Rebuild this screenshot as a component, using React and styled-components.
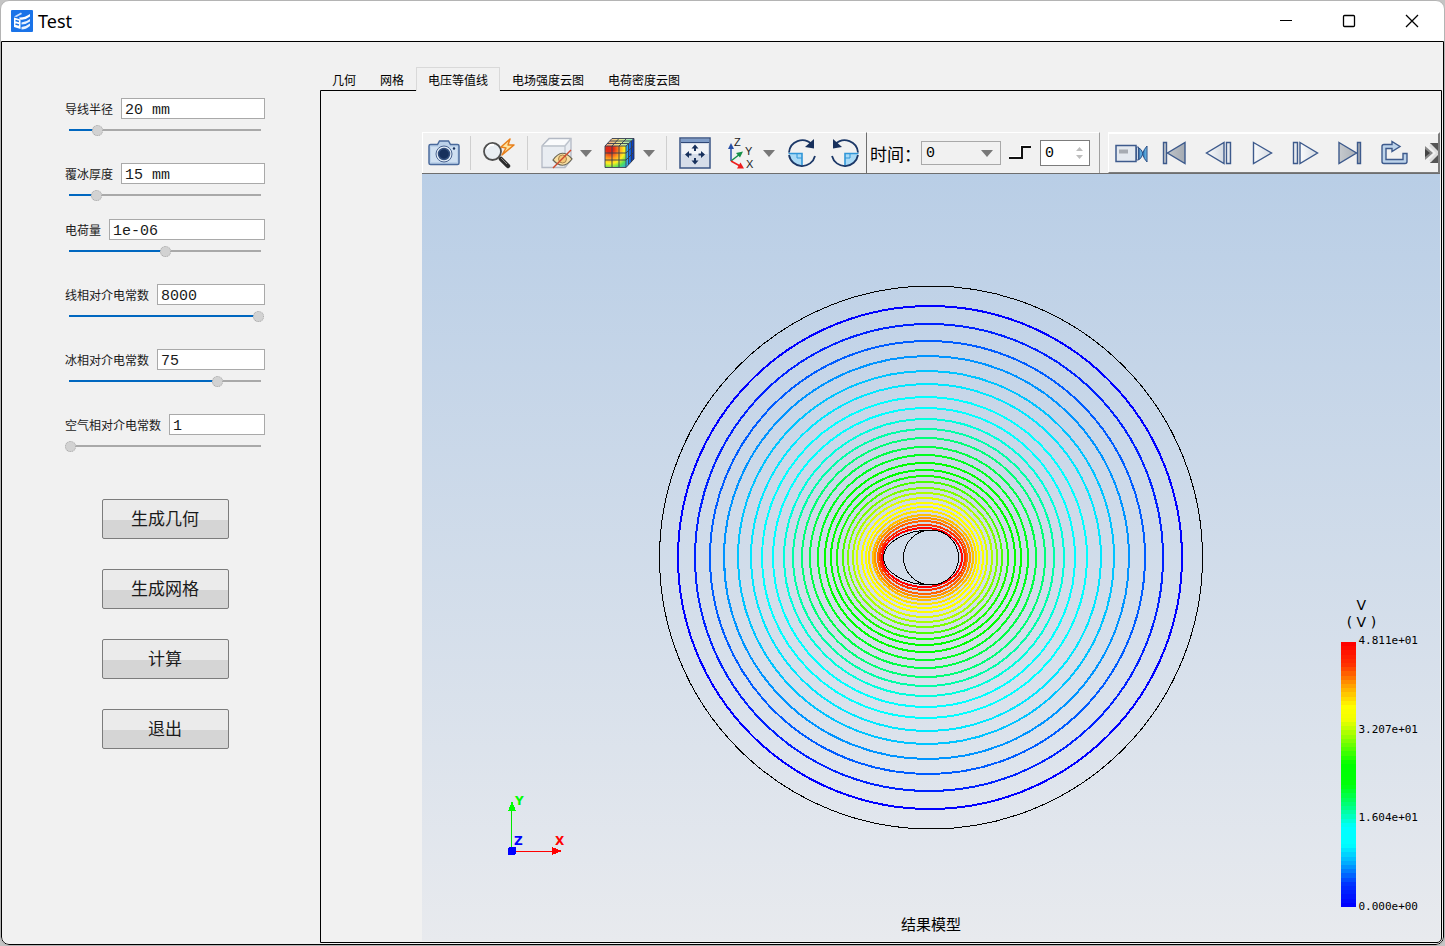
import React, { useState } from 'react';
import styled, { createGlobalStyle, css } from 'styled-components';

const PARAMS = [
  { id: 'radius', label: '导线半径', text: '20 mm', pos: 14.5 },
  { id: 'ice', label: '覆冰厚度', text: '15 mm', pos: 13.5, tight: true },
  { id: 'charge', label: '电荷量', text: '1e-06', pos: 50 },
  { id: 'wireEps', label: '线相对介电常数', text: '8000', pos: 99.5 },
  { id: 'iceEps', label: '冰相对介电常数', text: '75', pos: 78 },
  { id: 'airEps', label: '空气相对介电常数', text: '1', pos: 0 },
];

const ACTIONS = ['生成几何', '生成网格', '计算', '退出'];
const TABS = ['几何', '网格', '电压等值线', '电场强度云图', '电荷密度云图'];
const TICKS = ['4.811e+01', '3.207e+01', '1.604e+01', '0.000e+00'];

// left, right, top, colour of every equipotential line, from the outside in
const CONTOURS = [
  [678, 1182, 306, '#0000ff'],
  [695, 1163, 324, '#0022ff'],
  [710, 1145, 341, '#005cff'],
  [724, 1129, 356, '#0094ff'],
  [738, 1114, 371, '#00c4ff'],
  [751, 1101, 384, '#00e8ff'],
  [762, 1087, 397, '#00ffff'],
  [773, 1075, 408, '#00ffff'],
  [784, 1064, 419, '#00ffdc'],
  [793, 1054, 429, '#00ffa8'],
  [802, 1045, 438, '#00ff78'],
  [810, 1036, 447, '#00ff48'],
  [818, 1028, 455, '#00ff20'],
  [825, 1021, 463, '#00ff00'],
  [831, 1015, 470, '#00ff00'],
  [837, 1008, 476, '#14ff00'],
  [843, 1002, 482, '#4cff00'],
  [848, 997, 488, '#7cff00'],
  [853, 992, 493, '#acff00'],
  [857, 987, 498, '#dcff00'],
  [862, 983, 503, '#ffff00'],
  [866, 979, 507, '#ffff00'],
  [869, 976, 511, '#ffe400'],
  [873, 973, 515, '#ffc000'],
  [875, 970, 518, '#ff9400'],
  [878, 967, 521, '#ff6400'],
  [880, 965, 525, '#ff3400'],
  [882, 962, 528, '#ff0000'],
];
const CENTER_Y = 557.5;

const STOPS = [
  [0, 255, 0, 0],
  [0.08, 255, 50, 0],
  [0.16, 255, 160, 0],
  [0.24, 255, 255, 0],
  [0.29, 240, 255, 0],
  [0.37, 130, 255, 0],
  [0.46, 0, 255, 0],
  [0.54, 0, 255, 10],
  [0.63, 0, 255, 140],
  [0.7, 0, 255, 255],
  [0.77, 0, 255, 255],
  [0.84, 0, 170, 255],
  [0.92, 0, 50, 255],
  [1, 0, 0, 255],
];
const BANDS = 63;

function bandColor(t) {
  const i = Math.max(1, STOPS.findIndex((s) => s[0] >= t));
  const a = STOPS[i - 1];
  const b = STOPS[i];
  const k = (t - a[0]) / (b[0] - a[0]);
  const c = [1, 2, 3].map((n) => Math.round(a[n] + (b[n] - a[n]) * k));
  return `rgb(${c.join(',')})`;
}

function contourPath([left, right, top]) {
  const cx = Math.round(((left + right) / 2) * 0.6 + 929 * 0.4);
  const ry = CENTER_Y - top;
  return `M${left} ${CENTER_Y}A${cx - left} ${ry} 0 0 1 ${cx} ${top}A${right - cx} ${ry} 0 0 1 ${right} ${CENTER_Y}A${right - cx} ${ry} 0 0 1 ${cx} ${CENTER_Y + ry}A${cx - left} ${ry} 0 0 1 ${left} ${CENTER_Y}Z`;
}

export default function App() {
  return (
    <>
      <GlobalStyle />
      <Window>
        <TitleBar>
          <Logo />
          <Title>Test</Title>
          <WinButton aria-label="最小化">
            <svg width="14" height="14"><path d="M1 6.500h12" stroke="#000" /></svg>
          </WinButton>
          <WinButton aria-label="最大化">
            <svg width="14" height="14"><rect x="1.500" y="1.500" width="11" height="11" rx="1" fill="none" stroke="#000" strokeWidth="1.300" /></svg>
          </WinButton>
          <WinButton aria-label="关闭">
            <svg width="14" height="14"><path d="M1 1l12 12M13 1L1 13" stroke="#000" strokeWidth="1.300" /></svg>
          </WinButton>
        </TitleBar>
        <Main>
          <Sidebar>
            <Fields>
              {PARAMS.map((p) => <ParamField key={p.id} {...p} />)}
            </Fields>
            <Actions>
              {ACTIONS.map((a) => <ActionButton key={a} type="button">{a}</ActionButton>)}
            </Actions>
          </Sidebar>
          <Workspace />
        </Main>
      </Window>
    </>
  );
}

function ParamField({ id, label, text, pos, tight }) {
  const [value, setValue] = useState(pos);
  return (
    <Field $tight={tight}>
      <FieldRow>
        <label htmlFor={id}>{label}</label>
        <FieldInput id={id} defaultValue={text} />
      </FieldRow>
      <Slider
        type="range"
        min="0"
        max="100"
        step="0.5"
        aria-label={label}
        value={value}
        onChange={(e) => setValue(Number(e.target.value))}
        style={{ '--fill': `${value}%` }}
      />
    </Field>
  );
}

function Workspace() {
  const [tab, setTab] = useState(2);
  return (
    <Work>
      <TabList role="tablist">
        {TABS.map((t, i) => (
          <Tab key={t} type="button" role="tab" aria-selected={i === tab} $active={i === tab} onClick={() => setTab(i)}>
            {t}
          </Tab>
        ))}
      </TabList>
      <Pane>
        <ToolStrip />
        <ResultView />
      </Pane>
    </Work>
  );
}

function ToolStrip() {
  return (
    <Strip>
      <ViewTools>
        <ToolButton $w={41} aria-label="截图"><CameraIcon /></ToolButton>
        <Separator />
        <ToolButton $w={44} aria-label="快速查找"><SearchIcon /></ToolButton>
        <Separator />
        <SplitButton aria-label="隐藏"><HideCubeIcon /><Caret /></SplitButton>
        <SplitButton aria-label="着色"><ColorCubeIcon /><Caret /></SplitButton>
        <Separator />
        <ToolButton $w={44} aria-label="适合窗口"><FitIcon /></ToolButton>
        <SplitButton aria-label="坐标轴"><AxesIcon /><Caret /></SplitButton>
        <ToolButton $w={43} aria-label="顺时针旋转"><RotateIcon /></ToolButton>
        <ToolButton $w={43} aria-label="逆时针旋转"><RotateIcon flip /></ToolButton>
      </ViewTools>
      <TimeTools>
        <label htmlFor="time">时间：</label>
        <Combo>
          <select id="time" defaultValue="0"><option>0</option></select>
          <Caret />
        </Combo>
        <StepIcon />
        <Spin>
          <input aria-label="步" defaultValue="0" />
          <SpinArrows>
            <button type="button" aria-label="增加"><svg width="7" height="4"><path d="M0 4l3.500-4L7 4z" fill="#bdbdbd" /></svg></button>
            <button type="button" aria-label="减少"><svg width="7" height="4"><path d="M0 0l3.500 4L7 0z" fill="#bdbdbd" /></svg></button>
          </SpinArrows>
        </Spin>
      </TimeTools>
      <PlayTools>
        <SteelDefs />
        <ToolButton $w={43} aria-label="录像"><VideoIcon /></ToolButton>
        <ToolButton $w={44} aria-label="第一帧">
          <PlayIcon><path d="M5.500 3.500h3v21h-3zM27 3.500v21L9.500 14z" fill="url(#dark)" /></PlayIcon>
        </ToolButton>
        <ToolButton $w={44} aria-label="上一帧">
          <PlayIcon><path d="M22 3.500v21L4.500 14z" /><path d="M24.500 3.500h4v21h-4z" /></PlayIcon>
        </ToolButton>
        <ToolButton $w={44} aria-label="播放">
          <PlayIcon><path d="M7.500 3.500L25.500 14 7.500 24.500z" /></PlayIcon>
        </ToolButton>
        <ToolButton $w={44} aria-label="下一帧">
          <PlayIcon><path d="M3.500 3.500h4v21h-4z" /><path d="M10 3.500L27.500 14 10 24.500z" /></PlayIcon>
        </ToolButton>
        <ToolButton $w={44} aria-label="最后一帧">
          <PlayIcon><path d="M5 3.500L22.500 14 5 24.500zM23.500 3.500h3v21h-3z" fill="url(#dark)" /></PlayIcon>
        </ToolButton>
        <ToolButton $w={44} aria-label="循环">
          <PlayIcon>
            <path
              d="M6 5.500H14V2.500L22 7.500l-8 5V9.500H8V20.500H25V14.500h4V22.500q0 2-2 2H6q-2 0-2-2V7.500q0-2 2-2z"
              fill="#bdd3ea"
            />
          </PlayIcon>
        </ToolButton>
        <ToolButton $w={44} aria-label="更多">
          <svg width="26" height="20" viewBox="0 0 26 20">
            <path d="M0 3l8 7-8 7z" fill="#888" />
            <path d="M0 6l5 4-5 4z" fill="#444" />
            <path d="M5 0h14v20H5l7-10z" fill="#555" />
            <path d="M5 2l8 8-8 8" fill="none" stroke="#ddd" strokeWidth="3" />
          </svg>
        </ToolButton>
      </PlayTools>
    </Strip>
  );
}

function ResultView() {
  return (
    <Canvas>
      <Plot viewBox="422 174 1018 767" preserveAspectRatio="xMidYMid meet" shapeRendering="crispEdges" fill="none">
        <circle cx="931" cy="557.500" r="271.500" stroke="#000" />
        {CONTOURS.map((c) => (
          <path key={c[0]} d={contourPath(c)} stroke={c[3]} strokeWidth="2" />
        ))}
        <circle cx="931" cy="557.500" r="27.500" stroke="#000" />
        <path d="M931 530C905 530 883.500 543 883.500 557.500S905 585 931 585" stroke="#000" />
        <path d="M511.500 851V808" stroke="#00e600" />
        <path d="M512 801l4 10h-8z" fill="#00ff00" />
        <path d="M512 851.500H553" stroke="#ff0000" />
        <path d="M562 851l-10 4v-8z" fill="#ff0000" />
        <rect x="508" y="847" width="8" height="8" rx="2" fill="#0000ff" />
        <AxisName x="515" y="805" fill="#00ff00">Y</AxisName>
        <AxisName x="514" y="845" fill="#0000ff">Z</AxisName>
        <AxisName x="555" y="845" fill="#ff0000">X</AxisName>
      </Plot>
      <Legend>
        <LegendTitle><span>V</span><span>( V )</span></LegendTitle>
        <LegendBody>
          <svg width="15" height="265" viewBox={`0 0 15 ${BANDS}`} preserveAspectRatio="none" shapeRendering="crispEdges">
            {Array.from({ length: BANDS }, (_, i) => (
              <rect key={i} y={i} width="15" height="1" fill={bandColor(i / (BANDS - 1))} />
            ))}
          </svg>
          <Ticks>
            {TICKS.map((t) => <span key={t}>{t}</span>)}
          </Ticks>
        </LegendBody>
      </Legend>
      <Caption>结果模型</Caption>
    </Canvas>
  );
}

function Logo() {
  return (
    <svg width="22" height="22" viewBox="0 0 22 22">
      <rect width="22" height="22" rx="1" fill="#1a73e8" />
      <path d="M3 6.500L10 2.500l1 1.500L5.500 7z" fill="#cfe2ff" />
      <path d="M3 7.500l6.500 2v9.500L3 17z" fill="#fff" />
      <path d="M4.500 10.500l3.500 1M4.500 14l3.500 1" stroke="#1a73e8" strokeWidth="1.500" />
      <path d="M8 7.500q5 .5 11-3.500v2.500q-5 4-10 3z" fill="#fff" />
      <path d="M10.500 12.500q5-.5 8.500-3.500v2.500q-4 3-8.500 3zM10.500 17q4.500-.5 8.500-3.500V16q-4 3.500-8.500 3.500z" fill="#e8f1ff" />
    </svg>
  );
}

function Caret() {
  return <svg width="12" height="7"><path d="M0 0h12L6 7z" fill="#787878" /></svg>;
}

function CameraIcon() {
  return (
    <svg width="32" height="28" viewBox="0 0 32 28">
      <path d="M2.500 5.500h7l2-3.500h9l2 3.500h7q1.500 0 1.500 1.500v17q0 1.500-1.500 1.500h-27Q1 25.500 1 24V7q0-1.500 1.500-1.500z" fill="#bcd2ea" stroke="#4a6a9c" strokeWidth="1.500" />
      <path d="M3 8h26v15H3z" fill="#cfe0f2" />
      <circle cx="16" cy="15" r="8" fill="#e3edf7" stroke="#4a6490" />
      <circle cx="16" cy="15" r="5.500" fill="#17305c" stroke="#34507e" strokeWidth="1.500" />
      <circle cx="26" cy="9.500" r="1.200" fill="#17305c" />
    </svg>
  );
}

function SearchIcon() {
  return (
    <svg width="32" height="32" viewBox="0 0 32 32">
      <path d="M15 19l3 3" stroke="#777" strokeWidth="2" />
      <path d="M18 22l7 7" stroke="#2c2c2c" strokeWidth="4.500" strokeLinecap="round" />
      <path d="M18 21l6 6" stroke="#888" strokeWidth="1" />
      <circle cx="9.500" cy="14.500" r="8.500" fill="#e9eef3" stroke="#505050" strokeWidth="1.800" />
      <path d="M4 12q2-5 7-4" stroke="#fff" strokeWidth="2" fill="none" />
      <path d="M27 2l-9 8 5 1-4 7 12-10-6 0 2-6z" fill="#fde3a0" stroke="#e8801c" strokeWidth="1.500" strokeLinejoin="round" />
    </svg>
  );
}

function HideCubeIcon() {
  return (
    <svg width="32" height="32" viewBox="0 0 32 32">
      <path d="M1 9l7-7.500h22V23l-6 7.500H1z" fill="#e9edf2" stroke="#b3b9c4" strokeWidth="1.300" />
      <path d="M1 9h23v21M24 9l6-7.500" fill="none" stroke="#bdc3cc" strokeWidth="1.300" />
      <path d="M3 8l6-5.500h19L23 8z" fill="#fafbfc" />
      <path d="M12 23q9-13 19-1-9 12-19 1z" fill="#f8dfa3" stroke="#6b6654" strokeWidth="1.200" />
      <circle cx="21.500" cy="22" r="4" fill="#f4c878" stroke="#a9824c" />
      <path d="M12 31L30 13" stroke="#cf4a2c" strokeWidth="1.500" />
    </svg>
  );
}

function ColorCubeIcon() {
  return (
    <svg width="32" height="32" viewBox="0 0 32 32">
      <defs>
        <radialGradient id="heat" gradientUnits="userSpaceOnUse" cx="6" cy="12" r="24">
          <stop offset="0.150" stopColor="#e02818" />
          <stop offset="0.400" stopColor="#ff9a20" />
          <stop offset="0.600" stopColor="#ffee20" />
          <stop offset="0.800" stopColor="#52e058" />
          <stop offset="1" stopColor="#28a8e8" />
        </radialGradient>
        <linearGradient id="heatSide">
          <stop stopColor="#48c8f0" />
          <stop offset="0.500" stopColor="#1468e0" />
          <stop offset="1" stopColor="#0828a8" />
        </linearGradient>
        <linearGradient id="heatTop">
          <stop stopColor="#ffa080" />
          <stop offset="0.500" stopColor="#e8e888" />
          <stop offset="1" stopColor="#80e8c8" />
        </linearGradient>
      </defs>
      <path d="M1 9h21v21H1z" fill="url(#heat)" />
      <path d="M1 9l7-7.500h22L22 9z" fill="url(#heatTop)" />
      <path d="M22 9l8-7.500V22l-8 8.500z" fill="url(#heatSide)" />
      <path d="M1 9h21v21.500H1zM1 9l7-7.500h22V22l-8 8.500M22 9l8-7.500M8 9v21M15 9v21M1 16h21l8-7.500M1 23h21l8-8M8 9l7-7.500M15 9l7.500-7.500M3 6.500h21.500v21M6 4h21.500v21" fill="none" stroke="#333c50" strokeWidth="0.900" />
    </svg>
  );
}

function FitIcon() {
  return (
    <svg width="32" height="32" viewBox="0 0 32 32">
      <rect x="1" y="1" width="30" height="30" fill="#d6dde9" stroke="#3a5484" strokeWidth="1.500" />
      <path d="M2 2h28v3H2z" fill="#7f9cc8" />
      <path d="M2 5.500h28" stroke="#2f4878" />
      <path d="M3 7h26v10H3z" fill="#f1f3f7" />
      <path d="M16 10v4M16 21v4M9 17.500h3.500M19.500 17.500H23" stroke="#17305c" strokeWidth="2" />
      <path d="M16 7.500l3.500 4h-7zM16 27.500l3.500-4h-7zM6 17.500l4-3.500v7zM26 17.500l-4-3.500v7z" fill="#17305c" />
    </svg>
  );
}

function AxesIcon() {
  return (
    <AxesSvg width="32" height="34" viewBox="0 0 32 34">
      <path d="M7 25V9" stroke="#2850a8" strokeWidth="1.500" />
      <path d="M7 7l3 6H4z" fill="#2850a8" />
      <path d="M7 25l9-7" stroke="#169048" strokeWidth="1.500" />
      <path d="M19 15.500l-3 6-4-4.500z" fill="#169048" />
      <path d="M7 25l9 5" stroke="#ee1c1c" strokeWidth="1.500" />
      <path d="M20 32.500l-7 0 3.500-6z" fill="#ee1c1c" />
      <IconLetter x="10" y="10">Z</IconLetter>
      <IconLetter x="21" y="19">Y</IconLetter>
      <IconLetter x="22" y="32">X</IconLetter>
    </AxesSvg>
  );
}

function RotateIcon({ flip }) {
  return (
    <svg width="30" height="32" viewBox="0 0 30 32">
      <g transform={flip ? 'matrix(-1 0 0 1 30 0)' : undefined}>
        <path d="M2.500 17H15V29Q4 28.500 2.500 17z" fill="#a9daf6" />
        <path d="M1.500 16.500H15V29" fill="none" stroke="#3096d8" strokeWidth="1.600" />
        <path d="M10 17v4h5" fill="none" stroke="#3096d8" />
        <path d="M2 15.500A13.300 13.300 0 0 1 24.500 7M2 18A13.300 13.300 0 0 0 28 19" fill="none" stroke="#1c3867" strokeWidth="1.800" />
        <path d="M27 2v9.500l-9-1.500z" fill="#17305c" />
      </g>
    </svg>
  );
}

function StepIcon() {
  return (
    <svg width="22" height="16" viewBox="0 0 22 16" shapeRendering="crispEdges">
      <path d="M0 13H13V2H22" fill="none" stroke="#111" strokeWidth="2" />
      <path d="M0 11.500H11.500V0.500H21" fill="none" stroke="#fff" />
    </svg>
  );
}

function SteelDefs() {
  return (
    <svg width="0" height="0" aria-hidden="true">
      <defs>
        <linearGradient id="light"><stop stopColor="#fafbfc" /><stop offset="1" stopColor="#d4dae2" /></linearGradient>
        <linearGradient id="dark"><stop stopColor="#c6cace" /><stop offset="1" stopColor="#a4aab2" /></linearGradient>
        <linearGradient id="lens"><stop stopColor="#1c6fb4" /><stop offset="1" stopColor="#7cc4ee" /></linearGradient>
      </defs>
    </svg>
  );
}

function PlayIcon({ children }) {
  return (
    <svg width="32" height="28" viewBox="0 0 32 28" fill="url(#light)" stroke="#3d5a8c" strokeWidth="1.400">
      {children}
    </svg>
  );
}

function VideoIcon() {
  return (
    <svg width="34" height="24" viewBox="0 0 34 24">
      <rect x="2" y="4.500" width="20" height="16" fill="#e4e9ef" stroke="#3d5a8c" strokeWidth="1.500" />
      <rect x="5" y="8.500" width="9" height="4" fill="#a6abb2" />
      <path d="M22.500 6h2v13h-2z" fill="#c9d6e6" stroke="#3d5a8c" />
      <path d="M25 7q2.500 1 4 5.500-1.500 5-4 6z" fill="#5aa7dc" stroke="#2b4f86" />
      <path d="M33 5v16q-3-3-4.500-8 1.500-5 4.500-8z" fill="url(#lens)" stroke="#2b4f86" />
    </svg>
  );
}

const GlobalStyle = createGlobalStyle`
  * {
    box-sizing: border-box;
  }

  body {
    margin: 0;
    background: #c4c4c4;
    color: #000;
    font-family: "Noto Sans CJK SC", sans-serif;
    font-size: 12px;
  }

  button,
  input,
  select {
    margin: 0;
    padding: 0;
    border: 0;
    background: none;
    color: inherit;
    font: inherit;
  }

  svg {
    display: block;
    flex: none;
  }
`;

const Window = styled.div`
  display: flex;
  flex-direction: column;
  min-height: 100vh;
  border: 1px solid #b4b4b4;
  border-radius: 9px;
  background: #fff;
  overflow: hidden;
`;

const TitleBar = styled.header`
  display: flex;
  align-items: center;
  height: 40px;
  padding: 0 1px 0 10px;
`;

const Title = styled.h1`
  flex: 1;
  margin: 0;
  padding-left: 5px;
  font: 400 18px/24px "Noto Sans", sans-serif;
`;

const WinButton = styled.button`
  display: flex;
  align-items: center;
  justify-content: center;
  width: 63px;
  height: 40px;
`;

const Main = styled.main`
  flex: 1;
  display: flex;
  border: 1px solid #000;
  border-radius: 0 0 8px 8px;
  background: #f1f1f1;
`;

const Sidebar = styled.aside`
  flex: none;
  width: 318px;
  padding: 56px 55px 0 63px;
`;

const Fields = styled.div`
  display: flex;
  flex-direction: column;
`;

const Field = styled.div`
  margin-bottom: ${({ $tight }) => ($tight ? '18px' : '27px')};
`;

const FieldRow = styled.div`
  display: flex;
  align-items: center;
  gap: 8px;
  height: 21px;
  color: #1a1a1a;

  label {
    white-space: nowrap;
  }
`;

const FieldInput = styled.input`
  flex: 1;
  min-width: 0;
  height: 21px;
  padding: 3px 3px 0;
  border: 1px solid #a9a9a9;
  background: #fff;
  font: 15px/16px "Liberation Mono", monospace;
`;

const thumb = css`
  appearance: none;
  width: 11px;
  height: 11px;
  border: 1px dotted #a8a8a8;
  border-radius: 50%;
  background: #d2d2d2;
`;

const Slider = styled.input`
  appearance: none;
  display: block;
  width: 100%;
  height: 12px;
  margin-top: 5px;
  background: linear-gradient(90deg, #0067c0 var(--fill), #a9a9a9 var(--fill)) center / calc(100% - 8px) 2px no-repeat;

  &::-webkit-slider-thumb {
    ${thumb}
  }

  &::-moz-range-thumb {
    ${thumb}
  }
`;

const Actions = styled.div`
  display: flex;
  flex-direction: column;
  align-items: center;
  gap: 30px;
  padding-top: 20px;
`;

const ActionButton = styled.button`
  width: 127px;
  height: 40px;
  padding-bottom: 2px;
  border: 1px solid #7c7c7c;
  border-radius: 2px;
  background: linear-gradient(#ebebeb 52%, #d5d5d5 52%);
  color: #1a1a1a;
  font-size: 17px;
  line-height: 24px;
`;

const Work = styled.section`
  flex: 1;
  min-width: 0;
  display: flex;
  flex-direction: column;
  padding: 25px 1px 1px 0;
`;

const TabList = styled.div`
  display: flex;
  height: 24px;
  margin-bottom: -1px;
  z-index: 1;
`;

const Tab = styled.button`
  height: 24px;
  padding: 0 11px;
  border: 1px solid transparent;
  border-bottom: 0;
  white-space: nowrap;

  ${({ $active }) => $active && css`
    border-color: #d9d9d9;
    background: #f1f1f1;
  `}
`;

const Pane = styled.div`
  flex: 1;
  display: flex;
  flex-direction: column;
  border: 1px solid #000;
  border-bottom-right-radius: 5px;
  padding: 41px 1px 1px 101px;
`;

const Strip = styled.div`
  display: flex;
  height: 42px;
  border-bottom: 1px solid #6e6e6e;
  overflow: hidden;
`;

const ViewTools = styled.div`
  display: flex;
  align-items: center;
  flex: none;
  border-top: 1px solid #fff;
  border-left: 1px solid #fff;
  border-right: 1px solid #6e6e6e;
`;

const ToolButton = styled.button`
  display: flex;
  align-items: center;
  justify-content: center;
  flex: none;
  width: ${({ $w }) => $w}px;
  height: 40px;
`;

const SplitButton = styled.button`
  display: flex;
  align-items: center;
  gap: 7px;
  flex: none;
  height: 40px;
  padding: 0 5px 0 7px;
`;

const Separator = styled.span`
  width: 1px;
  height: 34px;
  margin: 0 6px;
  background: #cfcfcf;
`;

const TimeTools = styled.div`
  display: flex;
  align-items: center;
  flex: none;
  padding: 0 9px 0 3px;
  border-top: 1px solid #fff;
  border-right: 1px solid #a0a0a0;
  font-size: 17px;
`;

const Combo = styled.div`
  display: grid;
  align-items: center;
  margin-right: 8px;

  select,
  svg {
    grid-area: 1 / 1;
  }

  select {
    appearance: none;
    width: 80px;
    height: 24px;
    padding: 2px 0 0 4px;
    border: 1px solid #a9a9a9;
    font: 15px/20px "Liberation Mono", monospace;
  }

  svg {
    justify-self: end;
    margin-right: 8px;
    pointer-events: none;
  }
`;

const Spin = styled.div`
  display: flex;
  align-items: center;
  width: 50px;
  height: 26px;
  margin-left: 9px;
  border: 1px solid #7c7c7c;
  background: #fff;

  input {
    width: 30px;
    padding: 2px 0 0 4px;
    font: 15px/20px "Liberation Mono", monospace;
  }
`;

const SpinArrows = styled.div`
  display: grid;
  gap: 4px;
  margin-left: 5px;
`;

const PlayTools = styled.div`
  flex: 1;
  min-width: 0;
  display: flex;
  align-items: center;
  margin-left: 8px;
  border-top: 2px solid #fff;
  border-left: 1px solid #fff;
  border-right: 2px solid #7c7c7c;
  border-bottom: 1px solid #7c7c7c;
  overflow: hidden;
`;

const Canvas = styled.div`
  flex: 1;
  position: relative;
  display: flex;
  flex-direction: column;
  background: linear-gradient(#b9cee6, #e8eaee);
`;

const Plot = styled.svg`
  flex: 1;
  width: 100%;
  min-height: 0;
`;

const AxisName = styled.text`
  font: 700 12px "DejaVu Sans", sans-serif;
`;

const AxesSvg = styled.svg`
  overflow: visible;
`;

const IconLetter = styled.text`
  fill: #222;
  font: 11px "Liberation Sans", sans-serif;
`;

const Legend = styled.div`
  position: absolute;
  right: 22px;
  bottom: 27px;
`;

const LegendTitle = styled.div`
  display: grid;
  justify-items: center;
  width: 40px;
  margin-bottom: 3px;
  font: 14px/17px "DejaVu Sans", sans-serif;
`;

const LegendBody = styled.div`
  display: flex;
  align-items: center;
  gap: 2px;
`;

const Ticks = styled.div`
  display: flex;
  flex-direction: column;
  justify-content: space-between;
  height: 280px;
  font: 11px/14px "DejaVu Sans Mono", monospace;
`;

const Caption = styled.div`
  position: absolute;
  right: 0;
  bottom: 6px;
  left: 0;
  font-size: 15px;
  line-height: 22px;
  text-align: center;
`;
